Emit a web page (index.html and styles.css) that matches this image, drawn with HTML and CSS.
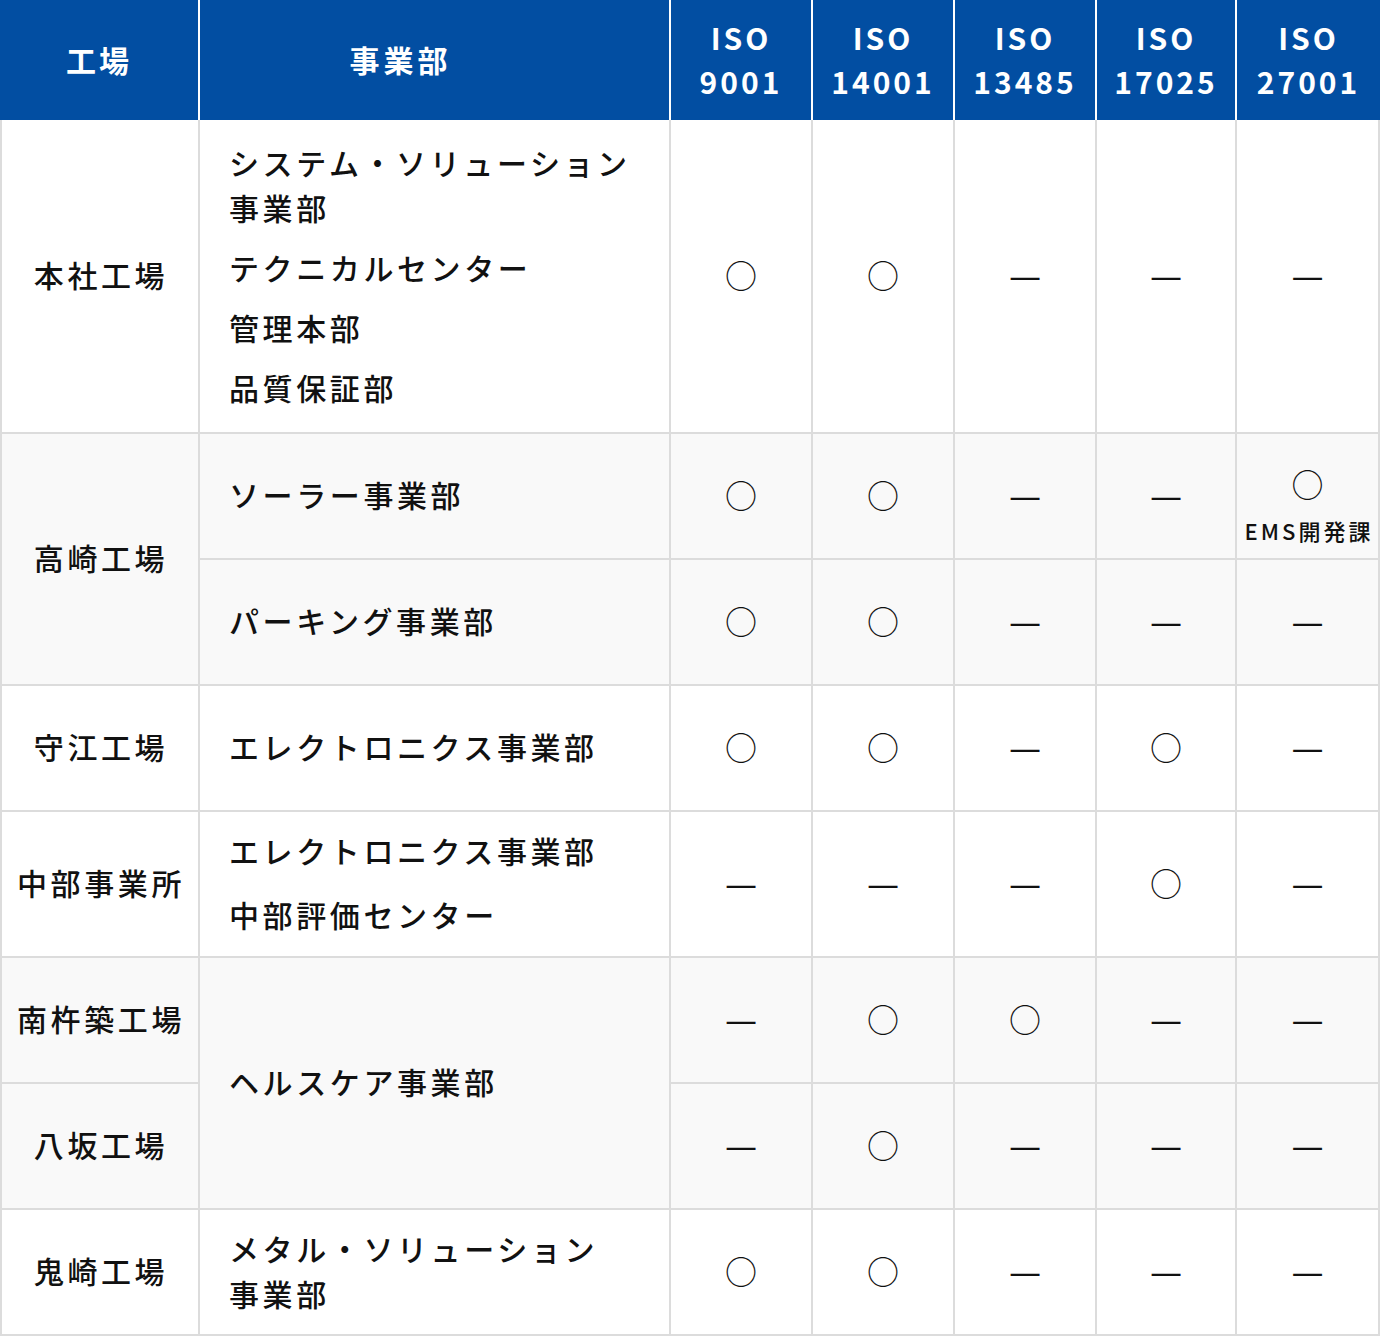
FILE: index.html
```html
<!DOCTYPE html>
<html lang="ja">
<head>
<meta charset="utf-8">
<title>ISO認証取得状況</title>
<link rel="stylesheet" href="styles.css">
</head>
<body>
<div class="iso-table">
  <div class="th th-plant">工場</div>
  <div class="th th-dept">事業部</div>
  <div class="th">ISO<br>9001</div>
  <div class="th">ISO<br>14001</div>
  <div class="th">ISO<br>13485</div>
  <div class="th">ISO<br>17025</div>
  <div class="th th-last">ISO<br>27001</div>

  <div class="td plant">本社工場</div>
  <div class="td dept dept-list">
    <p>システム・ソリューション<br>事業部</p>
    <p>テクニカルセンター</p>
    <p>管理本部</p>
    <p>品質保証部</p>
  </div>
  <div class="td mark">○</div>
  <div class="td mark">○</div>
  <div class="td mark dash">—</div>
  <div class="td mark dash">—</div>
  <div class="td mark dash">—</div>

  <div class="td plant alt span2">高崎工場</div>
  <div class="td dept alt">ソーラー事業部</div>
  <div class="td mark alt">○</div>
  <div class="td mark alt">○</div>
  <div class="td mark dash alt">—</div>
  <div class="td mark dash alt">—</div>
  <div class="td mark alt noted"><span class="circ">○</span><span class="note">EMS開発課</span></div>

  <div class="td dept alt">パーキング事業部</div>
  <div class="td mark alt">○</div>
  <div class="td mark alt">○</div>
  <div class="td mark dash alt">—</div>
  <div class="td mark dash alt">—</div>
  <div class="td mark dash alt">—</div>

  <div class="td plant">守江工場</div>
  <div class="td dept">エレクトロニクス事業部</div>
  <div class="td mark">○</div>
  <div class="td mark">○</div>
  <div class="td mark dash">—</div>
  <div class="td mark">○</div>
  <div class="td mark dash">—</div>

  <div class="td plant">中部事業所</div>
  <div class="td dept dept-list wide-gap">
    <p>エレクトロニクス事業部</p>
    <p>中部評価センター</p>
  </div>
  <div class="td mark dash">—</div>
  <div class="td mark dash">—</div>
  <div class="td mark dash">—</div>
  <div class="td mark">○</div>
  <div class="td mark dash">—</div>

  <div class="td plant alt">南杵築工場</div>
  <div class="td dept alt span2">ヘルスケア事業部</div>
  <div class="td mark dash alt">—</div>
  <div class="td mark alt">○</div>
  <div class="td mark alt">○</div>
  <div class="td mark dash alt">—</div>
  <div class="td mark dash alt">—</div>

  <div class="td plant alt">八坂工場</div>
  <div class="td mark dash alt">—</div>
  <div class="td mark alt">○</div>
  <div class="td mark dash alt">—</div>
  <div class="td mark dash alt">—</div>
  <div class="td mark dash alt">—</div>

  <div class="td plant">鬼崎工場</div>
  <div class="td dept">メタル・ソリューション<br>事業部</div>
  <div class="td mark">○</div>
  <div class="td mark">○</div>
  <div class="td mark dash">—</div>
  <div class="td mark dash">—</div>
  <div class="td mark dash">—</div>
</div>
</body>
</html>
```

FILE: styles.css
```css
html, body {
  margin: 0;
  padding: 0;
  background: #fff;
}

body {
  font-family: "Noto Sans CJK JP", "Noto Sans", sans-serif;
  color: #111;
}

.iso-table {
  display: grid;
  width: 1380px;
  grid-template-columns: 200px 471px 142px 142px 142px 140px 143px;
  grid-template-rows: 120px 314px 126px 126px 126px 146px 126px 126px 126px;
  font-size: 30px;
  line-height: 45px;
  letter-spacing: 3.6px;
  font-weight: 500;
}

.th {
  box-sizing: border-box;
  background: #024ea2;
  color: #fff;
  font-weight: 700;
  letter-spacing: 3px;
  border-right: 2px solid #fff;
  display: flex;
  align-items: center;
  justify-content: center;
  text-align: center;
  line-height: 44px;
  padding-bottom: 2px;
}

.th-dept {
  padding-right: 68px;
  letter-spacing: 4px;
}

.th-last {
  border-right: none;
}

.td {
  box-sizing: border-box;
  border-right: 2px solid #dcdcdc;
  border-bottom: 2px solid #dcdcdc;
  background: #fff;
  display: flex;
  align-items: center;
  padding-bottom: 3px;
}

.td.alt {
  background: #f9f9f9;
}

.plant {
  border-left: 2px solid #dcdcdc;
  justify-content: center;
  text-align: center;
  padding-left: 2px;
}

.span2 {
  grid-row: span 2;
}

.dept {
  padding-left: 29px;
}

.dept-list {
  flex-direction: column;
  align-items: flex-start;
  justify-content: center;
  gap: 15px;
}

.dept-list.wide-gap {
  gap: 19px;
}

.dept-list p {
  margin: 0;
}

.mark {
  justify-content: center;
  letter-spacing: 0;
  font-size: 32px;
  font-weight: 400;
}

.mark.dash {
  font-size: 36px;
  padding-bottom: 5px;
}

.mark.noted {
  flex-direction: column;
  justify-content: flex-start;
  padding-top: 27px;
}

.circ {
  display: block;
  line-height: 45px;
}

.note {
  display: block;
  margin-top: 8px;
  font-size: 22px;
  line-height: 33px;
  letter-spacing: 3px;
  font-weight: 500;
  padding-left: 3px;
}
```
